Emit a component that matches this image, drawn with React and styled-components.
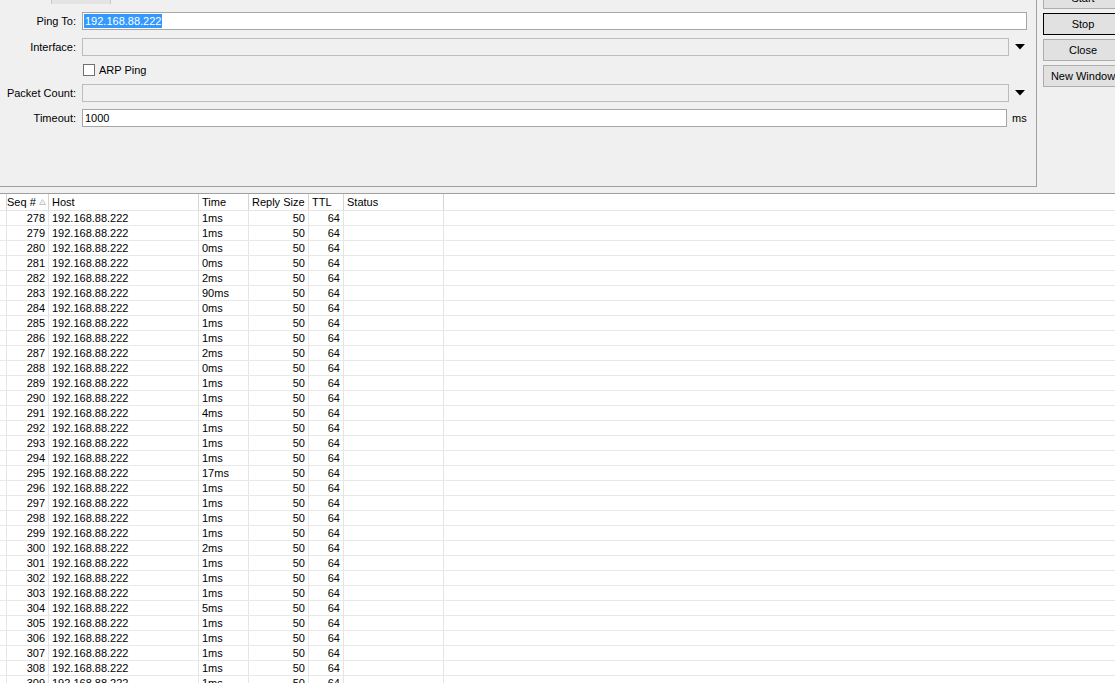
import React from "react";
import styled, { createGlobalStyle } from "styled-components";

const GlobalStyle = createGlobalStyle`
  html, body { margin: 0; padding: 0; background: #f0f0f0; overflow: hidden; }
  body { font-family: "Liberation Sans", Arial, sans-serif; font-size: 11px; color: #000; }
  * { box-sizing: border-box; }
`;

const Window = styled.div`
  width: 1115px;
  height: 683px;
  display: flex;
  flex-direction: column;
  overflow: hidden;
  background: #f0f0f0;
`;

const Top = styled.div`
  display: flex;
  flex: none;
  height: 187px;
  margin-bottom: 6px;
`;

const FormPanel = styled.div`
  width: 1037px;
  height: 187px;
  flex: none;
  border-right: 1px solid #a0a0a0;
  border-bottom: 1px solid #a0a0a0;
  display: flex;
  flex-direction: column;
`;

const TabStrip = styled.div`
  height: 4px;
  display: flex;
`;

const Tab = styled.div`
  margin-left: 51px;
  width: 60px;
  height: 4px;
  background: #e4e4e4;
  border-left: 1px solid #c9c9c9;
  border-right: 1px solid #c9c9c9;
`;

const Form = styled.div`
  display: flex;
  flex-direction: column;
  padding: 8px 9px 0 0;
`;

const Row = styled.div`
  display: flex;
  align-items: center;
  height: ${(p) => p.$h || 18}px;
  margin-top: ${(p) => p.$mt || 0}px;
`;

const Label = styled.div`
  width: 76px;
  margin-right: 6px;
  text-align: right;
  flex: none;
  white-space: nowrap;
`;

const Input = styled.div`
  flex: 1;
  height: 18px;
  border: 1px solid ${(p) => (p.$disabled ? "#bcbcbc" : "#a6a6a6")};
  background: ${(p) => (p.$disabled ? "#f0f0f0" : "#fff")};
  display: flex;
  align-items: center;
  padding-left: ${(p) => (p.$selected ? 1 : 2)}px;
  white-space: nowrap;
  overflow: hidden;
`;

const Selected = styled.span`
  background: #3399ff;
  color: #fff;
  line-height: 14px;
  padding: 0 1px;
`;

const ArrowBox = styled.div`
  width: 18px;
  flex: none;
  display: flex;
  align-items: center;
  justify-content: flex-end;
  padding-right: 2px;
`;

const Unit = styled.div`
  width: 20px;
  flex: none;
  padding-left: 5px;
`;

const CheckRow = styled(Row)`
  padding-left: 83px;
`;

const Check = styled.div`
  width: 12px;
  height: 12px;
  border: 1px solid #707070;
  background: #fff;
  flex: none;
  margin-right: 4px;
`;

const ButtonColumn = styled.div`
  margin-left: 6px;
  margin-top: -13px;
  display: flex;
  flex-direction: column;
  gap: 4px;
  flex: none;
`;

const Button = styled.div`
  width: 80px;
  height: 22px;
  background: #e1e1e1;
  border: 1px solid ${(p) => (p.$default ? "#000" : "#adadad")};
  display: flex;
  align-items: center;
  justify-content: center;
  white-space: nowrap;
`;

const Table = styled.div`
  flex: 1;
  background: #fff;
  border-top: 1px solid #a0a0a0;
  overflow: hidden;
`;

const GRID = "4px 45px 150px 50px 60px 35px 100px 1fr";

const HeaderRow = styled.div`
  display: grid;
  grid-template-columns: ${GRID};
  height: 17px;
  border-bottom: 1px solid #e5e5e5;
`;

const HeadCell = styled.div`
  border-right: 1px solid ${(p) => (p.$last ? "transparent" : "#d5d5d5")};
  padding: 0 3px;
  display: flex;
  align-items: center;
  white-space: nowrap;
  overflow: hidden;
`;

const DataRow = styled.div`
  display: grid;
  grid-template-columns: ${GRID};
  height: 15px;
  border-bottom: 1px solid #e8e8e8;
`;

const Cell = styled.div`
  border-right: 1px solid ${(p) => (p.$last ? "transparent" : "#e5e5e5")};
  padding: 0 3px;
  display: flex;
  align-items: center;
  justify-content: ${(p) => (p.$right ? "flex-end" : "flex-start")};
  white-space: nowrap;
  overflow: hidden;
  color: #000;
`;

const SortMark = styled.svg`
  margin-left: 3px;
  flex: none;
`;

const DropArrow = () => (
  <svg width="10" height="6" viewBox="0 0 10 6">
    <polygon points="0,0 10,0 5,5.5" fill="#000" />
  </svg>
);

const times = [1, 1, 0, 0, 2, 90, 0, 1, 1, 2, 0, 1, 1, 4, 1, 1, 1, 17, 1, 1, 1, 1, 2, 1, 1, 1, 5, 1, 1, 1, 1, 1];
const rows = times.map((t, i) => ({ seq: 278 + i, time: `${t}ms` }));

export default function App() {
  return (
    <>
      <GlobalStyle />
      <Window>
        <Top>
          <FormPanel>
            <TabStrip>
              <Tab />
            </TabStrip>
            <Form>
              <Row>
                <Label>Ping To:</Label>
                <Input $selected>
                  <Selected>192.168.88.222</Selected>
                </Input>
              </Row>
              <Row $mt={8}>
                <Label>Interface:</Label>
                <Input $disabled />
                <ArrowBox>
                  <DropArrow />
                </ArrowBox>
              </Row>
              <CheckRow $mt={7} $h={13}>
                <Check />
                <span>ARP Ping</span>
              </CheckRow>
              <Row $mt={8}>
                <Label>Packet Count:</Label>
                <Input $disabled />
                <ArrowBox>
                  <DropArrow />
                </ArrowBox>
              </Row>
              <Row $mt={7}>
                <Label>Timeout:</Label>
                <Input>1000</Input>
                <Unit>ms</Unit>
              </Row>
            </Form>
          </FormPanel>
          <ButtonColumn>
            <Button>Start</Button>
            <Button $default>Stop</Button>
            <Button>Close</Button>
            <Button>New Window</Button>
          </ButtonColumn>
        </Top>
        <Table>
          <HeaderRow>
            <HeadCell />
            <HeadCell>
              Seq #
              <SortMark width="7" height="6" viewBox="0 0 7 6">
                <polygon points="3.5,0.5 6.5,5.5 0.5,5.5" fill="#f4f4f4" stroke="#c4c4c4" strokeWidth="1" />
              </SortMark>
            </HeadCell>
            <HeadCell>Host</HeadCell>
            <HeadCell>Time</HeadCell>
            <HeadCell>Reply Size</HeadCell>
            <HeadCell>TTL</HeadCell>
            <HeadCell>Status</HeadCell>
            <HeadCell $last />
          </HeaderRow>
          {rows.map((r) => (
            <DataRow key={r.seq}>
              <Cell />
              <Cell $right>{r.seq}</Cell>
              <Cell>192.168.88.222</Cell>
              <Cell>{r.time}</Cell>
              <Cell $right>50</Cell>
              <Cell $right>64</Cell>
              <Cell />
              <Cell $last />
            </DataRow>
          ))}
        </Table>
      </Window>
    </>
  );
}
